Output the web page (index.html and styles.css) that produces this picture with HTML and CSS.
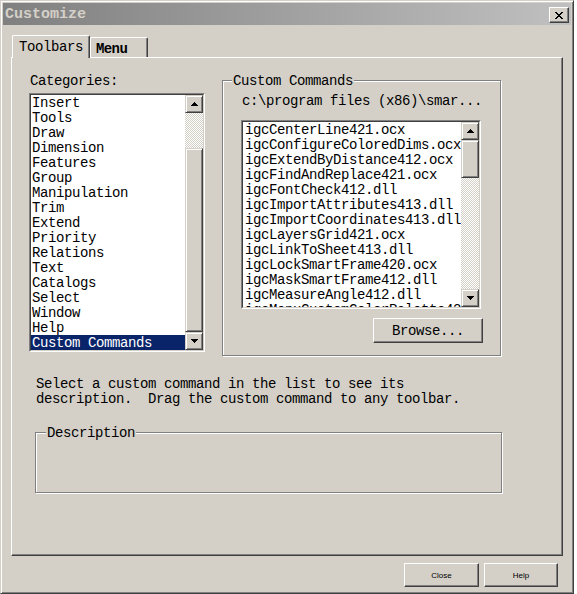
FILE: index.html
```html
<!DOCTYPE html>
<html lang="en">
<head>
  <meta charset="UTF-8">
  <meta name="viewport" content="width=device-width, initial-scale=1.0">
  <title>Customize</title>
  <link rel="stylesheet" href="styles.css">
</head>
<body>
  <div class="window">
    <div class="titlebar">
      <span class="title">Customize</span>
      <button class="close-btn" type="button" aria-label="Close">
        <svg width="8" height="7" viewBox="0 0 8 7" shape-rendering="crispEdges"><path d="M0 0h2v1H0zM6 0h2v1H6zM1 1h2v1H1zM5 1h2v1H5zM2 2h4v1H2zM3 3h2v1H3zM2 4h4v1H2zM1 5h2v1H1zM5 5h2v1H5zM0 6h2v1H0zM6 6h2v1H6z" fill="#000"/></svg>
      </button>
    </div>

    <div class="client">
      <div class="tabs">
        <div class="tab active">Toolbars</div>
        <div class="tab menu">Menu</div>
      </div>

      <div class="tab-panel">
        <div class="top-row">
          <div class="categories">
            <div class="field-label">Categories:</div>
            <div class="listbox cat-list">
              <div class="listbox-body">
                <ul class="items">
                  <li>Insert</li>
                  <li>Tools</li>
                  <li>Draw</li>
                  <li>Dimension</li>
                  <li>Features</li>
                  <li>Group</li>
                  <li>Manipulation</li>
                  <li>Trim</li>
                  <li>Extend</li>
                  <li>Priority</li>
                  <li>Relations</li>
                  <li>Text</li>
                  <li>Catalogs</li>
                  <li>Select</li>
                  <li>Window</li>
                  <li>Help</li>
                  <li class="selected">Custom Commands</li>
                </ul>
                <div class="vscroll">
                  <div class="sb-btn"><svg width="7" height="4" viewBox="0 0 7 4" shape-rendering="crispEdges"><path d="M3 0h1v1H3zM2 1h3v1H2zM1 2h5v1H1zM0 3h7v1H0z" fill="#000"/></svg></div>
                  <div class="sb-track cat-gap"></div>
                  <div class="sb-thumb grow"></div>
                  <div class="sb-btn"><svg width="7" height="4" viewBox="0 0 7 4" shape-rendering="crispEdges"><path d="M0 0h7v1H0zM1 1h5v1H1zM2 2h3v1H2zM3 3h1v1H3z" fill="#000"/></svg></div>
                </div>
              </div>
            </div>
          </div>

          <div class="group cmd-group">
            <span class="group-label">Custom Commands</span>
            <div class="path">c:\program files (x86)\smar...</div>
            <div class="listbox cmd-list">
              <div class="listbox-body">
                <ul class="items">
                  <li>igcCenterLine421.ocx</li>
                  <li>igcConfigureColoredDims.ocx</li>
                  <li>igcExtendByDistance412.ocx</li>
                  <li>igcFindAndReplace421.ocx</li>
                  <li>igcFontCheck412.dll</li>
                  <li>igcImportAttributes413.dll</li>
                  <li>igcImportCoordinates413.dll</li>
                  <li>igcLayersGrid421.ocx</li>
                  <li>igcLinkToSheet413.dll</li>
                  <li>igcLockSmartFrame420.ocx</li>
                  <li>igcMaskSmartFrame412.dll</li>
                  <li>igcMeasureAngle412.dll</li>
                  <li>igcMenuCustomColorPalette421.ocx</li>
                </ul>
                <div class="vscroll">
                  <div class="sb-btn"><svg width="7" height="4" viewBox="0 0 7 4" shape-rendering="crispEdges"><path d="M3 0h1v1H3zM2 1h3v1H2zM1 2h5v1H1zM0 3h7v1H0z" fill="#000"/></svg></div>
                  <div class="sb-thumb cmd-thumb"></div>
                  <div class="sb-track grow"></div>
                  <div class="sb-btn"><svg width="7" height="4" viewBox="0 0 7 4" shape-rendering="crispEdges"><path d="M0 0h7v1H0zM1 1h5v1H1zM2 2h3v1H2zM3 3h1v1H3z" fill="#000"/></svg></div>
                </div>
              </div>
            </div>
            <button class="btn browse" type="button">Browse...</button>
          </div>
        </div>

        <p class="hint">Select a custom command in the list to see its<br>description.&nbsp; Drag the custom command to any toolbar.</p>

        <div class="group desc-group">
          <span class="group-label">Description</span>
        </div>
      </div>

      <div class="footer">
        <button class="btn small" type="button">Close</button>
        <button class="btn small help" type="button">Help</button>
      </div>
    </div>
  </div>
</body>
</html>
```

FILE: styles.css
```css
body { margin: 0; background: #fff; font-family: "Liberation Mono", "Courier New", monospace; font-size: 14px; letter-spacing: -0.4px; line-height: 15px; color: #000; }

/* classic 3d window frame */
.window { width: 574px; height: 594px; box-sizing: border-box; background: #d4d0c8; border: 1px solid; border-color: #d4d0c8 #404040 #404040 #d4d0c8; box-shadow: inset 1px 1px #fff, inset -1px -1px #808080; padding: 2px; }

.titlebar { height: 22px; display: flex; align-items: center; justify-content: space-between; padding: 0 2px 0 2px; background: linear-gradient(to right, #808080, #c0c0c0); }
.title { color: #d4d0c8; font-weight: bold; font-size: 15px; letter-spacing: 0; }
.close-btn { width: 20px; height: 16px; margin-top: 2px; padding: 0; display: flex; align-items: center; justify-content: center; background: #d4d0c8; border: 1px solid; border-color: #fff #404040 #404040 #fff; box-shadow: inset -1px -1px #808080; }

.client { padding: 10px 8px 0 8px; }

/* tabs */
.tabs { display: flex; align-items: flex-end; height: 22px; margin-left: 1px; position: relative; z-index: 1; }
.tab { box-sizing: border-box; height: 20px; padding: 4px 0 0 5px; background: #d4d0c8; border: 1px solid; border-bottom: none; border-color: #fff #404040 #fff #fff; box-shadow: inset -1px 0 #808080; border-radius: 2px 2px 0 0; }
.tab.active { width: 78px; height: 23px; padding-left: 6px; margin-bottom: -1px; }
.tab.menu { width: 58px; font-weight: bold; letter-spacing: -0.6px; }

.tab-panel { box-sizing: border-box; width: 552px; height: 499px; border: 1px solid; border-color: #fff #404040 #404040 #fff; box-shadow: inset -1px -1px #808080; }

.top-row { display: flex; padding-left: 17px; }
.categories { width: 176px; margin-top: 16px; }
.field-label { margin-bottom: 4px; padding-left: 1px; }

/* sunken list boxes */
.listbox { box-sizing: border-box; border: 1px solid; border-color: #808080 #fff #fff #808080; }
.listbox-body { box-sizing: border-box; height: 100%; display: flex; background: #fff; border: 1px solid; border-color: #404040 #d4d0c8 #d4d0c8 #404040; }
.cat-list { height: 259px; }
.cmd-list { width: 240px; height: 189px; margin: 11px 0 0 -1px; }
.items { flex: 1; margin: 0; padding: 0; list-style: none; overflow: hidden; }
.items li { box-sizing: border-box; height: 15px; padding: 1px 0 0 1px; line-height: 14px; white-space: nowrap; }
.cmd-list .items li { padding-left: 2px; }
.items li.selected { background: #0a246a; color: #fff; }

.vscroll { width: 18px; display: flex; flex-direction: column; }
.sb-btn, .sb-thumb { box-sizing: border-box; background: #d4d0c8; border: 1px solid; border-color: #d4d0c8 #404040 #404040 #d4d0c8; box-shadow: inset 1px 1px #fff, inset -1px -1px #808080; }
.sb-btn { height: 18px; display: flex; align-items: center; justify-content: center; }
.sb-track { background: conic-gradient(#fff 25%, #d4d0c8 0 50%, #fff 0 75%, #d4d0c8 0) 0 0 / 2px 2px; }
.cat-gap { height: 35px; }
.cmd-thumb { height: 38px; }
.grow { flex: 1; }

/* etched group boxes */
.group { position: relative; box-sizing: border-box; border: 1px solid #808080; box-shadow: inset 1px 1px #fff, 1px 1px #fff; }
.group-label { position: absolute; top: -7px; left: 9px; padding: 0 1px; background: #d4d0c8; }
.cmd-group { width: 279px; height: 276px; margin: 22px 0 0 17px; padding: 13px 0 0 19px; }
.desc-group { width: 467px; height: 61px; margin: 25px 0 0 23px; }
.desc-group .group-label { left: 10px; }

.btn { box-sizing: border-box; padding: 0; background: #d4d0c8; font: inherit; letter-spacing: inherit; color: #000; border: 1px solid; border-color: #fff #404040 #404040 #fff; box-shadow: inset -1px -1px #808080; }
.browse { display: block; width: 110px; height: 25px; margin: 9px 0 0 131px; padding-top: 2px; }

.hint { margin: 21px 0 0 24px; }

.footer { display: flex; justify-content: flex-end; gap: 5px; margin-top: 7px; padding-right: 5px; }
.btn.small { width: 75px; height: 24px; font-family: "Liberation Sans", Arial, sans-serif; font-size: 8px; letter-spacing: 0; }
.btn.help { width: 74px; }
```
